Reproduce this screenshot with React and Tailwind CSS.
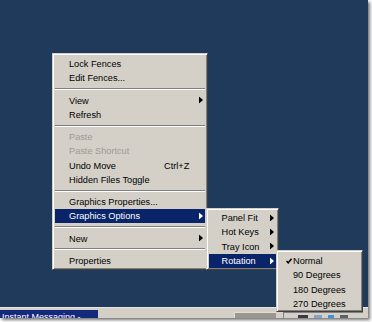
import React from "react";

const font = { fontFamily: 'Tahoma, "Liberation Sans", Arial, sans-serif' };

function Arrow({ white }) {
  return (
    <svg
      width="4"
      height="7"
      viewBox="0 0 4 7"
      className="absolute right-[2.5px] top-1/2 -translate-y-1/2"
    >
      <polygon points="0,0 4,3.5 0,7" fill={white ? "#ffffff" : "#000000"} />
    </svg>
  );
}

function Sep() {
  return (
    <div className="h-[7.9px] flex flex-col justify-center">
      <div className="h-px bg-[#808080]" />
      <div className="h-px bg-white" />
    </div>
  );
}

function MainItem({ label, shortcut, arrow, disabled, active }) {
  return (
    <div
      className={
        "relative h-[14.3px] flex items-center pt-[2.2px] pl-[14px] whitespace-nowrap " +
        (active ? "bg-[#0a246a] text-white" : disabled ? "text-[#9c9a94]" : "text-black")
      }
    >
      <span className="w-[95px] shrink-0">{label}</span>
      {shortcut && <span>{shortcut}</span>}
      {arrow && <Arrow white={active} />}
    </div>
  );
}

function SubItem({ label, active }) {
  return (
    <div
      className={
        "relative h-[14.4px] flex items-center pt-[2px] pl-[13px] whitespace-nowrap " +
        (active ? "bg-[#0a246a] text-white" : "text-black")
      }
    >
      <span>{label}</span>
      <Arrow white={active} />
    </div>
  );
}

function RotItem({ label, checked }) {
  return (
    <div className="relative h-[14.6px] flex items-center pt-[3px] pl-[14px] whitespace-nowrap text-black">
      {checked && (
        <svg
          width="6"
          height="6"
          viewBox="0 0 6 6"
          className="absolute left-[6.5px] top-[5px]"
        >
          <polyline points="0.5,3 2.2,4.8 5.6,0.8" fill="none" stroke="#000" strokeWidth="1.5" />
        </svg>
      )}
      <span>{label}</span>
    </div>
  );
}

const menuFrame =
  "absolute bg-[#d4d0c8] border border-t-[#d4d0c8] border-l-[#d4d0c8] border-r-[#404040] border-b-[#404040] shadow-[inset_1px_1px_0_#ffffff,inset_-1px_-1px_0_#808080]";

export default function App() {
  return (
    <div className="w-[372px] h-[322px] bg-white relative overflow-hidden text-[9.2px] leading-none" style={font}>
      <div className="w-[368px] h-[318px] flex flex-col relative shadow-[2px_2px_3px_rgba(0,0,0,0.55)]">
        {/* desktop */}
        <div className="flex-1 bg-[#1f3a5b]" />
        {/* taskbar */}
        <div className="h-[11px] bg-[#d4d0c8] border-t border-t-[#e8e6e0] flex items-end">
          <div className="w-[98px] h-[8px] bg-[#14297c] overflow-hidden text-white text-[9px] pl-[2px] leading-[14px]">
            Instant Messaging - Chat
          </div>
          <div className="flex-1" />
          <div className="w-[42px] h-[6px] bg-[#9a9791] border-t border-l border-[#e0ded8] mr-[7px]" />
          <div className="w-[80px] h-[6px] border-t border-l border-[#808080] flex items-end gap-[6px] pl-[14px]">
            <div className="w-[10px] h-[3px] bg-[#3a3a3a]" />
            <div className="w-[8px] h-[3px] bg-[#8aa0c8]" />
            <div className="w-[6px] h-[3px] bg-[#3c8fd8]" />
            <div className="w-[8px] h-[3px] bg-[#606060]" />
          </div>
          <div className="w-[5px]" />
        </div>

        {/* main context menu */}
        <div className={menuFrame + " left-[52px] top-[53px] w-[156px] pt-[2.5px] pb-[1px] px-[2px] z-10"}>
          <MainItem label="Lock Fences" />
          <MainItem label="Edit Fences..." />
          <Sep />
          <MainItem label="View" arrow />
          <MainItem label="Refresh" />
          <Sep />
          <MainItem label="Paste" disabled />
          <MainItem label="Paste Shortcut" disabled />
          <MainItem label="Undo Move" shortcut="Ctrl+Z" />
          <MainItem label="Hidden Files Toggle" />
          <Sep />
          <MainItem label="Graphics Properties..." />
          <MainItem label="Graphics Options" arrow active />
          <Sep />
          <MainItem label="New" arrow />
          <Sep />
          <MainItem label="Properties" />
        </div>

        {/* graphics options submenu */}
        <div className={menuFrame + " left-[206px] top-[208px] w-[73px] pt-[1.5px] pb-[1px] px-[1.5px] z-20"}>
          <SubItem label="Panel Fit" />
          <SubItem label="Hot Keys" />
          <SubItem label="Tray Icon" />
          <SubItem label="Rotation" active />
        </div>

        {/* rotation submenu */}
        <div className={menuFrame + " left-[276px] top-[250px] w-[87px] pt-[1.5px] pb-[0px] px-[2px] z-30"}>
          <RotItem label="Normal" checked />
          <RotItem label="90 Degrees" />
          <RotItem label="180 Degrees" />
          <RotItem label="270 Degrees" />
        </div>
      </div>
    </div>
  );
}
